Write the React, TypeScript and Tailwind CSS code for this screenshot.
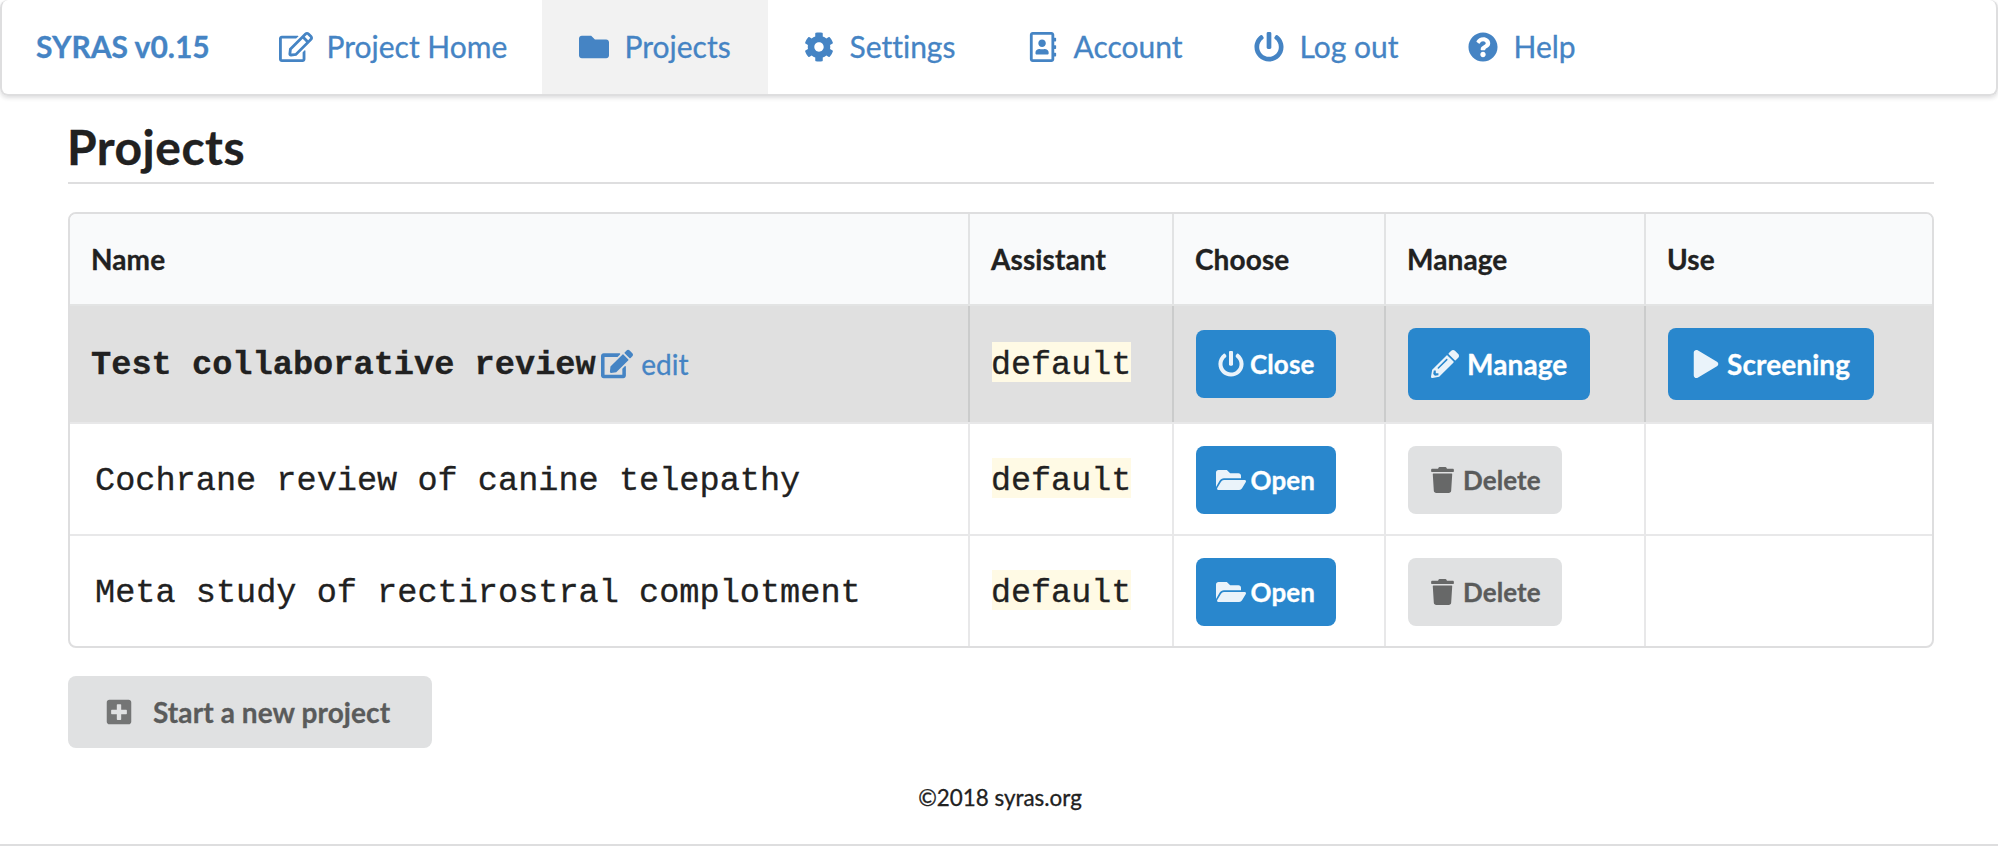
import type { ReactNode } from "react";
import {
  FaRegEdit, FaFolder, FaCog, FaRegAddressBook, FaPowerOff, FaQuestionCircle,
  FaEdit, FaPencilAlt, FaPlay, FaFolderOpen, FaPlusSquare,
} from "react-icons/fa";

const sans = "font-['Lato',sans-serif]";
const mono = "font-['Liberation_Mono',monospace]";

function TrashIcon({ className }: { className?: string }) {
  return (
    <svg viewBox="0 0 448 512" fill="currentColor" className={className}>
      <path d="M0 84V56c0-13.3 10.7-24 24-24h112l9.4-18.7c4-8.2 12.3-13.3 21.4-13.3h114.3c9.1 0 17.4 5.1 21.5 13.3L312 32h112c13.3 0 24 10.7 24 24v28c0 6.6-5.4 12-12 12H12C5.4 96 0 90.6 0 84zm415.2 56.7L394.8 467c-1.6 25.3-22.6 45-47.9 45H101.1c-25.3 0-46.3-19.7-47.9-45L32.8 140.7c-.4-6.9 5.1-12.7 12-12.7h358.5c6.8 0 12.3 5.8 11.9 12.7z" />
    </svg>
  );
}

function NavItem({ icon, label, width, active }: { icon: ReactNode; label: string; width: string; active?: boolean }) {
  return (
    <a className={`flex h-full shrink-0 items-center ${width} ${active ? "bg-[#f2f2f2] pl-[34px]" : "pl-[33px]"}`}>
      <span className="mr-[13px] flex w-[35.5px] shrink-0 justify-center">{icon}</span>
      <span className="pb-[2px] whitespace-nowrap">{label}</span>
    </a>
  );
}

function Button({ icon, label, className }: { icon: ReactNode; label: string; className: string }) {
  return (
    <button className={`flex items-center rounded-[8px] font-bold tracking-[0.1px] whitespace-nowrap ${className}`}>
      {icon}
      <span>{label}</span>
    </button>
  );
}

const grid = "grid grid-cols-[898px_204px_212px_260px_288px]";
const cell = "flex items-center border-l-2 px-[22px]";
const headCell = "flex items-center border-l-2 border-[#e2e3e4] px-[21px]";

function ProjectRow({ name }: { name: string }) {
  return (
    <div className={`${grid} h-[112px] border-t-2 border-[#e8e8e9]`}>
      <div className={`flex items-center pt-[4px] pl-[25px] text-[33.6px] ${mono}`}>{name}</div>
      <div className={`${cell} border-[#e8e8e9] pb-[2px]`}><Tag /></div>
      <div className={`${cell} border-[#e8e8e9] pt-[2px]`}>
        <Button label="Open" className="h-[68px] w-[140px] gap-[5px] bg-[#2987cd] pl-[19.5px] text-[26px] text-white" icon={<FaFolderOpen className="size-[30px] opacity-90" />} />
      </div>
      <div className={`${cell} border-[#e8e8e9] pt-[2px]`}>
        <Button label="Delete" className="h-[68px] w-[154px] gap-[9px] bg-[#e0e1e2] pl-[23px] text-[26px] text-[#5a5b5b]" icon={<TrashIcon className="h-[26px] w-[23px] opacity-90" />} />
      </div>
      <div className={`${cell} border-[#e8e8e9]`} />
    </div>
  );
}

function Tag() {
  return <span className={`h-[40px] bg-[#fffae5] pt-[3px] text-[33.4px] leading-[40px] ${mono}`}><span className="-ml-px">default</span></span>;
}

export default function App() {
  return (
    <div className={`flex h-[852px] w-[1998px] flex-col overflow-hidden bg-white text-[#212121] [-webkit-text-stroke:0.3px_currentColor] [font-variant-ligatures:none] ${sans}`}>
      <nav className="flex h-[96px] shrink-0 rounded-[8px] border-2 border-t-0 border-[#dededf] text-[30px] leading-none text-[#4584c4] shadow-[0_2px_4px_0_rgba(34,36,38,0.15)]">
        <a className="flex w-[243px] shrink-0 items-center pb-[2px] pl-[34px] font-bold">SYRAS v0.15</a>
        <NavItem width="w-[297px]" label="Project Home" icon={<FaRegEdit className="size-[34px] shrink-0" />} />
        <NavItem width="w-[226px]" label="Projects" active icon={<FaFolder className="size-[30px]" />} />
        <NavItem width="w-[224px]" label="Settings" icon={<FaCog className="size-[30px]" />} />
        <NavItem width="w-[226px]" label="Account" icon={<FaRegAddressBook className="size-[30px]" />} />
        <NavItem width="w-[214px]" label="Log out" icon={<FaPowerOff className="size-[30px]" />} />
        <NavItem width="w-[180px]" label="Help" icon={<FaQuestionCircle className="size-[30px]" />} />
      </nav>
      <main className="flex flex-col px-[68px]">
        <h1 className="mt-[24px] h-[64px] w-[1866px] border-b-2 border-[#dededf] text-[48px] leading-[53px] font-bold tracking-[0.5px] -indent-px">Projects</h1>
        <div className="mt-[28px] w-[1866px] overflow-hidden rounded-[8px] border-2 border-[#dededf]">
          <div className={`${grid} h-[90px] bg-[#f9fafb] text-[28px] font-bold tracking-[0.1px]`}>
            <div className="flex items-center px-[21px]">Name</div>
            <div className={headCell}>Assistant</div>
            <div className={headCell}>Choose</div>
            <div className={headCell}>Manage</div>
            <div className={headCell}>Use</div>
          </div>
          <div className={`${grid} h-[118px] border-t-2 border-[#e3e4e4] bg-[#e0e0e0]`}>
            <div className="flex items-center pl-[21px]">
              <span className={`pt-[2px] text-[33.65px] font-bold ${mono}`}>Test collaborative review</span>
              <a className="ml-[5.5px] flex items-center gap-[8px] text-[28px] text-[#4584c4]">
                <FaEdit className="size-[32px]" />
                edit
              </a>
            </div>
            <div className={`${cell} border-[#cbcccc] pb-[4px]`}><Tag /></div>
            <div className={`${cell} border-[#cbcccc]`}>
              <Button label="Close" className="h-[68px] w-[140px] gap-[6px] bg-[#2987cd] pl-[22px] text-[26px] text-white" icon={<FaPowerOff className="size-[26px] opacity-90" />} />
            </div>
            <div className={`${cell} border-[#cbcccc]`}>
              <Button label="Manage" className="h-[72px] w-[182px] gap-[8px] bg-[#2987cd] pl-[23px] text-[28px] text-white" icon={<FaPencilAlt className="size-[28px] opacity-90" />} />
            </div>
            <div className={`${cell} border-[#cbcccc]`}>
              <Button label="Screening" className="h-[72px] w-[206px] gap-[7px] bg-[#2987cd] pl-[24px] text-[28px] text-white" icon={<FaPlay className="size-[28px] opacity-90" />} />
            </div>
          </div>
          <ProjectRow name="Cochrane review of canine telepathy" />
          <ProjectRow name="Meta study of rectirostral complotment" />
        </div>
        <Button label="Start a new project" className="mt-[28px] h-[72px] w-[364px] gap-[20px] bg-[#e0e1e2] pl-[37px] text-[28px] text-[#5a5b5b]" icon={<FaPlusSquare className="size-[28px] opacity-80" />} />
      </main>
      <footer className="mt-auto h-[102px] shrink-0">
        <p className="h-[96px] border-b-2 border-[#dededf] pt-[32px] pl-[2px] text-center text-[22.4px] leading-[32px]">©2018 syras.org</p>
      </footer>
    </div>
  );
}
